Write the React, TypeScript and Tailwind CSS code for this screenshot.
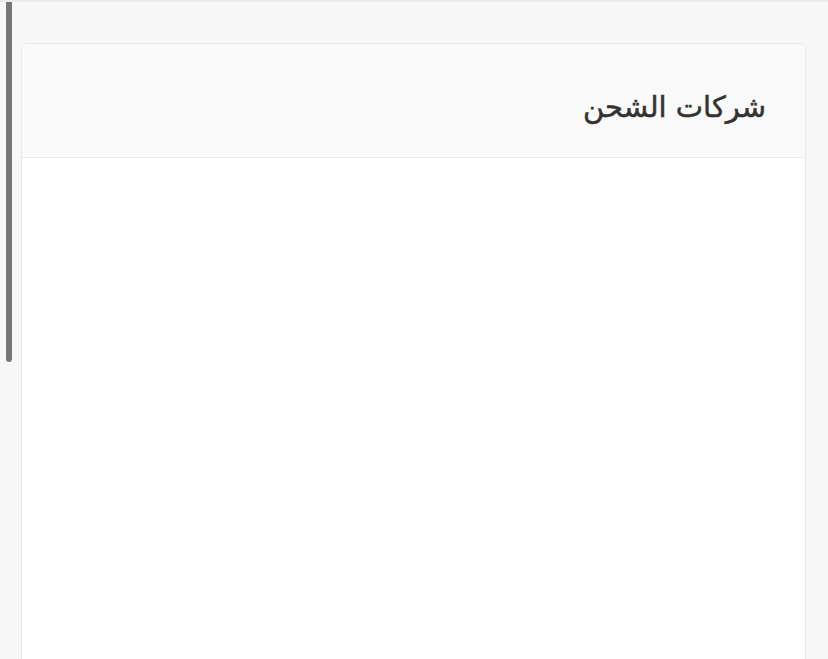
export default function App() {
    return (
        <div className="h-[659px] w-[828px] overflow-hidden bg-[#f7f7f7] border-t-2 border-[#ececec] flex">
            {/* Side scroll track */}
            <div className="w-[21px] shrink-0 pl-[6px]">
                <div className="w-[6px] h-[360px] bg-[#777777] rounded-b-[3px]"></div>
            </div>

            <div className="flex-1 pt-[41px] pr-[22px]">
                <div dir="rtl" className="bg-white border border-[#e9e9e9] rounded-[6px] h-[700px]">
                    <div className="h-[114px] bg-[#fafafa] border-b border-[#ececec] rounded-t-[6px] flex items-center pr-[39px] pt-[14px]">
                        <h2 className="text-[29px] font-normal text-[#333333] [-webkit-text-stroke:0.5px_#333333] font-['DejaVu_Sans',sans-serif]">
                            شركات الشحن
                        </h2>
                    </div>
                </div>
            </div>
        </div>
    );
}
